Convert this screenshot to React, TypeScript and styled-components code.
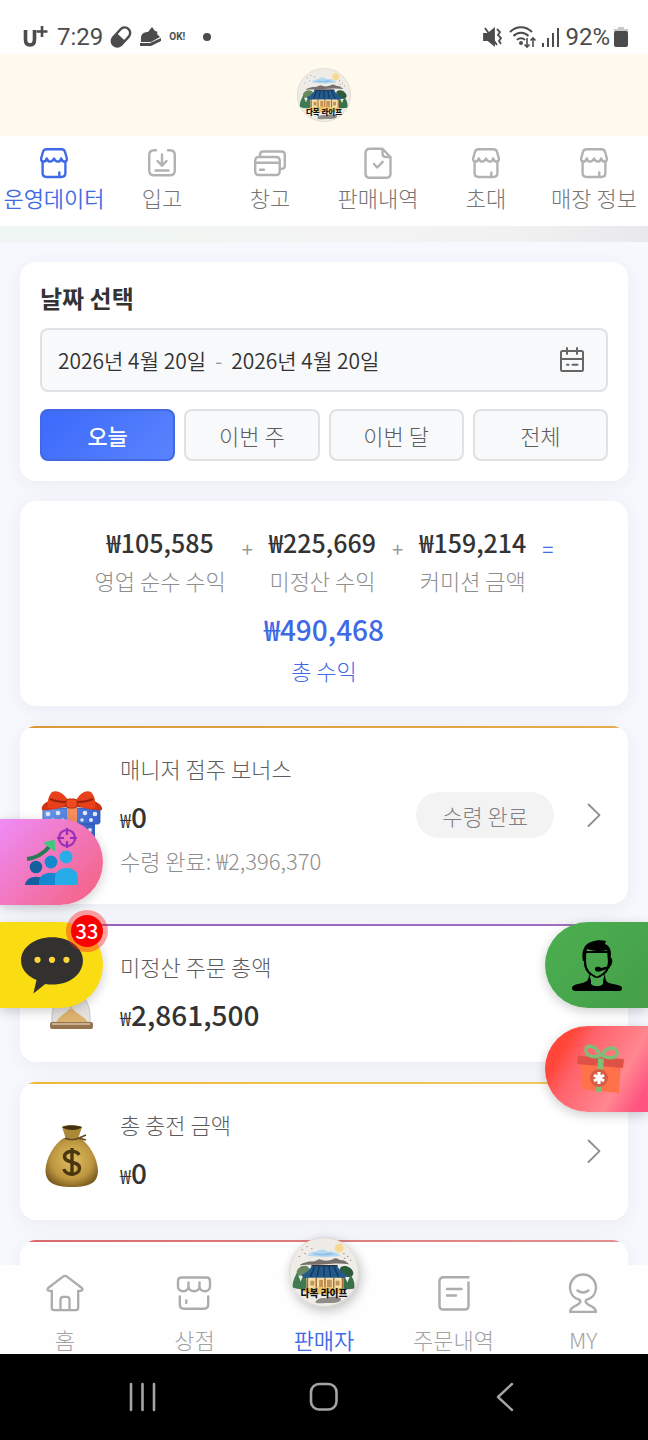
import React from "react";
import styled, { createGlobalStyle, css } from "styled-components";

const GlobalStyle = createGlobalStyle`
  *, *::before, *::after { box-sizing: border-box; }
  body { margin: 0; background: #000; }
  body, button { font-family: "Noto Sans CJK KR", "Noto Sans", sans-serif; }
  button { border: 0; padding: 0; background: none; color: inherit; cursor: pointer; }
  a { color: inherit; text-decoration: none; }
  h2, p { margin: 0; }
  svg { display: block; flex: none; }
`;

const blue = "#3f6ae6";

const Shell = styled.div`
  display: flex;
  flex-direction: column;
  height: 100vh;
  overflow: hidden;
  background: #f7f8fe;
`;

/* ---------- status bar ---------- */

const StatusBar = styled.div`
  display: flex;
  align-items: center;
  justify-content: space-between;
  height: 54px;
  flex: none;
  padding: 20px 20px 0 22px;
  background: #fefefe;
  color: #4c4c4c;
  font: 400 24px/34px Roboto, sans-serif;
`;

const StatusGroup = styled.div<{ $gap: number }>`
  display: flex;
  align-items: center;
  gap: ${(p) => p.$gap}px;
`;

const TinyOk = styled.span`
  padding: 0 12px 0 0;
  font-size: 10px;
  font-weight: 700;
`;

const Dot = styled.span`
  width: 8px;
  height: 8px;
  border-radius: 50%;
  background: currentColor;
`;

/* ---------- header and tabs ---------- */

const BrandBar = styled.header`
  display: flex;
  align-items: center;
  justify-content: center;
  height: 82px;
  flex: none;
  background: #fff9ee;
`;

const Tabs = styled.nav`
  display: grid;
  grid-template-columns: repeat(6, 1fr);
  padding: 11px 0 13px;
  flex: none;
  background: #fff;
`;

const Tab = styled.a<{ $active?: boolean }>`
  display: flex;
  flex-direction: column;
  align-items: center;
  gap: 2px;
  color: ${(p) => (p.$active ? blue : "#757575")};
  font-weight: ${(p) => (p.$active ? 350 : 300)};
  font-size: 22px;
  line-height: 32px;
  white-space: nowrap;
  svg { color: ${(p) => (p.$active ? blue : "#b2b2b2")}; }
`;

const Strip = styled.div`
  height: 16px;
  flex: none;
  background: linear-gradient(90deg, #eef5f2 0%, #f0f5f2 30%, #f4f4f4 55%, #f1f1f1 80%, #e9e9ed 100%);
`;

/* ---------- cards ---------- */

const Stage = styled.div`
  position: relative;
  flex: 1;
  min-height: 0;
`;

const Main = styled.main`
  display: flex;
  flex-direction: column;
  gap: 20px;
  height: 100%;
  padding: 20px;
  overflow-y: auto;
  scrollbar-width: none;
`;

const cardBase = css`
  flex: none;
  background: #fff;
  border-radius: 16px;
  box-shadow: 0 4px 20px rgba(50, 52, 60, 0.06);
`;

const DateCard = styled.section`
  ${cardBase}
  padding: 20px;
`;

const DateTitle = styled.h2`
  margin-bottom: 14px;
  color: #333;
  font-size: 24px;
  font-weight: 700;
  line-height: 32px;
`;

const DateField = styled.button`
  display: flex;
  align-items: center;
  width: 100%;
  height: 64px;
  padding: 0 20px 0 16px;
  border: 2px solid #e0e1e3;
  border-radius: 8px;
  background: #f8f9fb;
  color: #333;
  font-size: 21px;
  font-weight: 350;
  line-height: 32px;
  svg { margin-left: auto; color: #666; }
`;

const Dash = styled.span`
  padding: 0 9px;
  color: #999;
`;

const Ranges = styled.div`
  display: grid;
  grid-template-columns: repeat(4, 1fr);
  gap: 9px;
  margin-top: 17px;
`;

const RangeButton = styled.button<{ $active?: boolean }>`
  height: 52px;
  border: 2px solid ${(p) => (p.$active ? "#4269e2" : "#e0e1e3")};
  border-radius: 8px;
  background: ${(p) => (p.$active ? "linear-gradient(135deg, #3b69fb, #5a84fd) border-box" : "#f8f9fb")};
  color: ${(p) => (p.$active ? "#fff" : "#5c5c5c")};
  font-size: 22px;
  font-weight: ${(p) => (p.$active ? 500 : 300)};
  line-height: 32px;
`;

const SummaryCard = styled.section`
  ${cardBase}
  padding: 23px 20px 16px;
`;

const Sum = styled.div`
  display: flex;
  justify-content: center;
  gap: 16px;
  margin-bottom: 8px;
`;

const Figure = styled.div<{ $total?: boolean }>`
  text-align: center;
  strong {
    display: block;
    color: ${(p) => (p.$total ? blue : "#333")};
    font-size: ${(p) => (p.$total ? 28 : 25)}px;
    font-weight: 500;
    line-height: ${(p) => (p.$total ? 42 : 36)}px;
  }
  span {
    display: block;
    color: ${(p) => (p.$total ? blue : "#8e8e8e")};
    font-size: 22px;
    font-weight: 300;
    line-height: 40px;
  }
`;

const Operator = styled.span<{ $blue?: boolean }>`
  color: ${(p) => (p.$blue ? blue : "#999")};
  font-size: 20px;
  line-height: 50px;
`;

const MetricFrame = styled.section`
  ${cardBase}
`;

const MetricCard = styled.div<{ $line: string }>`
  position: relative;
  display: flex;
  align-items: center;
  gap: 16px;
  min-height: 138px;
  padding: 0 20px;
  border-radius: 16px;
  overflow: hidden;
  &::before {
    content: "";
    position: absolute;
    inset: 0 0 auto;
    height: 2px;
    background: ${(p) => p.$line};
  }
`;

const MetricText = styled.div`
  flex: 1;
  padding: 26px 0 28px;
`;

const MetricTitle = styled.h2`
  color: #5c5c5c;
  font-size: 22px;
  font-weight: 300;
  line-height: 32px;
`;

const MetricValue = styled.p`
  display: flex;
  align-items: baseline;
  height: 40px;
  margin-top: 12px;
  color: #333;
  font-size: 28px;
  font-weight: 500;
  line-height: 40px;
  small { font-size: 20px; font-weight: 350; }
`;

const MetricNote = styled.p`
  margin-top: 8px;
  color: #8e8e8e;
  font-size: 22px;
  font-weight: 300;
  line-height: 32px;
`;

const Pill = styled.button`
  height: 46px;
  margin-right: 10px;
  padding: 0 26px;
  border-radius: 23px;
  background: #f3f3f3;
  color: #808084;
  font-size: 22px;
  font-weight: 300;
  line-height: 32px;
`;

const Arrow = styled.a`
  color: #8e8e8e;
`;

/* ---------- floating shortcuts ---------- */

const Rail = styled.div<{ $side: "left" | "right"; $bottom: number }>`
  position: absolute;
  ${(p) => p.$side}: 0;
  bottom: ${(p) => p.$bottom}px;
  display: flex;
  flex-direction: column;
  gap: ${(p) => (p.$side === "left" ? 17 : 18)}px;
`;

const Float = styled.button<{ $side: "left" | "right"; $bg: string }>`
  position: relative;
  display: flex;
  align-items: center;
  justify-content: center;
  width: 103px;
  height: 86px;
  border-radius: ${(p) => (p.$side === "left" ? "0 43px 43px 0" : "43px 0 0 43px")};
  background: ${(p) => p.$bg};
  box-shadow: 0 3px 12px rgba(0, 0, 0, 0.2);
`;

const Badge = styled.span`
  position: absolute;
  top: -7px;
  right: 0;
  width: 32px;
  height: 32px;
  border-radius: 50%;
  background: #fb0000;
  box-shadow: 0 0 0 5px rgba(255, 30, 30, 0.42);
  color: #fff;
  font-size: 20px;
  font-weight: 500;
  line-height: 32px;
  text-align: center;
`;

/* ---------- bottom navigation ---------- */

const Dock = styled.nav`
  position: absolute;
  inset: auto 0 0;
  display: grid;
  grid-template-columns: repeat(5, 1fr);
  padding: 8px 0 1px;
  background: #fefefe;
`;

const DockItem = styled.a<{ $active?: boolean }>`
  display: flex;
  flex-direction: column;
  align-items: center;
  gap: 12px;
  color: ${(p) => (p.$active ? blue : "#a2a2a2")};
  font-size: 22px;
  font-weight: ${(p) => (p.$active ? 350 : 300)};
  line-height: 28px;
  svg { color: #acacac; }
`;

const DockLogo = styled.span`
  margin: -36px 0 6px;
  border-radius: 50%;
  box-shadow: 2px 4px 12px rgba(0, 0, 0, 0.25);
`;

const SystemBar = styled.div`
  display: grid;
  grid-template-columns: repeat(3, 1fr);
  align-items: center;
  justify-items: center;
  height: 86px;
  flex: none;
  padding: 0 52px;
  background: #000;
  color: #a4a4a4;
`;

/* ---------- drawings ---------- */

const line = {
  fill: "none",
  stroke: "currentColor",
  strokeWidth: 2.2,
  strokeLinecap: "round" as const,
  strokeLinejoin: "round" as const,
};

const StoreIcon = () => (
  <svg width="32" height="32" viewBox="0 0 32 32" {...line} strokeWidth={2.4}>
    <path d="M8.500 2.200h15c2 0 3.100.9 3.500 2.600l1.800 6.400c.5 2.100-.7 3.400-2.200 3.400-1.600 0-2.700-1-3.400-3.100-.7 2.100-1.700 3.100-3.400 3.100s-2.900-1-3.800-3.100c-.9 2.100-2.100 3.100-3.800 3.100s-2.700-1-3.400-3.100c-.7 2.100-1.800 3.100-3.400 3.100-1.500 0-2.700-1.300-2.200-3.400L5 4.800c.4-1.700 1.500-2.600 3.500-2.600Z" />
    <path d="M4.600 14.500V26c0 2.600 1.500 4 4 4h14.800c2.500 0 4-1.400 4-4V14.500M21.300 25.500V29" />
  </svg>
);

const InboxIcon = () => (
  <svg width="32" height="32" viewBox="0 0 32 32" {...line} strokeWidth={2.400}>
    <path d="M10 3.200H8c-3 0-4.800 1.800-4.800 4.800v15.500c0 3 1.800 4.800 4.800 4.800h16c3 0 4.800-1.800 4.800-4.800V8c0-3-1.800-4.800-4.800-4.800h-2M16 7.500V18M11.500 14l4.500 4.700 4.500-4.700M9.500 23.500h13" />
  </svg>
);

const CardsIcon = () => (
  <svg width="32" height="32" viewBox="0 0 32 32" {...line} strokeWidth={2.400}>
    <path d="M6 9V7.800C6 5.600 7.200 4.500 9.200 4.500h18.300c2 0 3.300 1.100 3.300 3.300v10.900c0 2-1.200 3.200-3.300 3.200H26" />
    <rect x="1.200" y="10" width="24.500" height="18" rx="3.200" />
    <path d="M1.500 15.800h24M6 22.800h4" />
  </svg>
);

const FileCheckIcon = () => (
  <svg width="32" height="32" viewBox="0 0 32 32" {...line} strokeWidth={2.400}>
    <path d="M20.500 1.800H8C5 1.800 3.500 3.300 3.500 6v20.500c0 2.700 1.500 4.300 4.500 4.300h16c3 0 4.500-1.600 4.500-4.300V10l-8-8.200ZM20.500 2v4.500c0 2.300 1.200 3.500 3.500 3.500h4.500M12 17l3.200 3.500 5.500-5.700" />
  </svg>
);

const CalendarIcon = () => (
  <svg width="28" height="28" viewBox="0 0 28 28" {...line} strokeWidth={2}>
    <rect x="3" y="5" width="22" height="20" rx="1.500" />
    <path d="M3 13h22M9 2v6M19 2v6M9 18.800h1.500M14.500 18.800h5" />
  </svg>
);

const ChevronIcon = () => (
  <svg width="28" height="28" viewBox="0 0 28 28" {...line} strokeWidth={1.800}>
    <path d="M8.500 3.500 19.500 14.200 8.500 25" />
  </svg>
);

const HomeIcon = () => (
  <svg width="40" height="40" viewBox="0 0 40 40" {...line} strokeWidth={2.300}>
    <path d="M6.800 17.800v17c0 1.600.9 2.400 2.400 2.400h21.600c1.500 0 2.400-.8 2.400-2.400v-17M6.800 17.800H4.300c-1.700 0-2.500-1.600-1.200-2.800L18 3.600c1.300-1 2.700-1 4 0L36.900 15c1.300 1.200.5 2.800-1.200 2.800h-2.500M15.500 37V26.500c0-1.700 1-2.700 2.700-2.700h3.600c1.700 0 2.700 1 2.700 2.700V37" />
  </svg>
);

const ShopIcon = () => (
  <svg width="40" height="40" viewBox="0 0 40 40" {...line} strokeWidth={2.400}>
    <path d="M7.500 4.500h25c2.200 0 3.500 1.300 3.500 3.500v5.200c0 3-2.200 5-5.200 5s-5.300-2-5.300-5c0 3-2.500 5-5.500 5s-5.500-2-5.500-5c0 3-2.300 5-5.300 5S4 16.200 4 13.200V8c0-2.200 1.300-3.500 3.500-3.500ZM14.500 13V9.500M25.500 13V9.500" />
    <path d="M5.800 23.500v8c0 2.800 1.500 4.200 4.200 4.200h20c2.700 0 4.200-1.400 4.200-4.200v-8M12.300 27.500v2.500" />
  </svg>
);

const OrdersIcon = () => (
  <svg width="40" height="40" viewBox="0 0 40 40" {...line} strokeWidth={2.400}>
    <path d="M34.500 4.300H9.500C7 4.300 5.500 5.700 5.500 8v25c0 2.300 1.500 3.500 4 3.500h21c2.500 0 4-1.200 4-3.500V9.500M13 16h14.500M13 22.500h9" />
  </svg>
);

const PersonIcon = () => (
  <svg width="40" height="40" viewBox="0 0 40 40" {...line} strokeWidth={2.400}>
    <path d="M16.500 26.800C10.800 25.300 7 20.700 7 14.800 7 7.300 12.800 1.500 20 1.500s13 5.800 13 13.300c0 5.900-3.800 10.500-9.500 12M14.500 17.500c3.600 2.600 7.400 2.600 11 0M16.500 26.800c2.500 2-1 4.700-4 6-3.500 1.500-5.300 3-5.300 6.200h25.600c0-3.200-1.800-4.700-5.300-6.200-3-1.300-6.500-4-4-6" />
  </svg>
);

const HanokLogo = ({ size, label }: { size: number; label: string }) => (
  <svg width={size} height={size} viewBox="0 0 72 72" role="img" aria-label={label}>
    <circle cx="36" cy="36" r="35.500" fill="#efece7" stroke="#c9c6c2" strokeWidth=".6" />
    <circle cx="51.500" cy="11.500" r="4.500" fill="#f7d893" />
    <circle cx="51.500" cy="11.500" r="6.500" fill="none" stroke="#f8e2b0" strokeWidth="1" strokeDasharray="1.500 2" />
    <path d="M19 19c2-3 6-4 9-4 3-3 9-3 12 0 6-1 11 2 13 4-8 2-24 2-34 0Z" fill="#b6d9f1" />
    <path d="M24 18c4-3 8 0 12-1s8-1 11 1c-7 1.500-17 1.500-23 0Z" fill="#8fc2e8" />
    <path d="M13 13h1M18 10h1M16 17h1M23 12h1M56 17h1M60 20h1M57 22h1M63 24h1M10 20h1" stroke="#666" strokeWidth="1" />
    <path d="M11 29c3-3 8-3 11-4 4 1 6-1 9-2 5 2 10 2 14 0 4-3 6 1 9 1 4 0 5 2 8 4-8-1-15-1-25 0s-18 0-26 1Z" fill="#77706c" />
    <path d="M8 35c2-5 8-7 12-4 3 3 1 7-3 8l-9 1Z" fill="#65885e" />
    <path d="M53 31c5-3 11 0 13 5 1 4-3 6-7 5-5-1-8-6-6-10Z" fill="#2c5d3b" />
    <path d="M4 52c-1-5 2-11 4-15 2 3 3 6 4 9 1-3 2-6 4-7 2 4 4 9 3 14-5 1-10 1-15-1Z" fill="#3f7a50" />
    <path d="M53 52c-1-5 1-9 3-12 2 2 3 4 4 7 1-3 2-6 4-7 3 4 4 9 3 13-5 1-10 1-14-1Z" fill="#3a7049" />
    <path d="M18 41h38v12H18Z" fill="#f5e0b0" />
    <path d="M19 41v12M28 42v11M37 42v11M46 42v11M55 41v12" stroke="#a86c2f" strokeWidth="1.500" />
    <path d="M22 45h4v5h-4ZM48 45h4v5h-4ZM31 44h4v8h-4ZM39 44h5v8h-5Z" fill="#c79352" />
    <path d="M24 29h25c3 5 6 8 11 10-1 3-4 4-7 3H20c-3 1-6 0-7-3 5-2 8-5 11-10Z" fill="#235a8c" />
    <path d="M26 31l-4 10M31 30l-2 11M36 30v11M41 30l2 11M46 30l5 11" stroke="#123a60" strokeWidth="1.500" />
    <path d="M23 29.500h27" stroke="#2b3440" strokeWidth="1.500" />
    <path d="M14 54c8-3 36-3 44 0 1 3-6 5-22 5s-23-2-22-5Z" fill="#eec46a" />
    <path d="M27 67c2-4 7-5 11-4 4-2 10-2 15 0 2 3-3 5-10 5s-14 1-16-1Z" fill="#8e8b89" />
    <text x="36" y="62" textAnchor="middle" fontSize="10" fontWeight="900" fill="#111" fontFamily="Noto Sans CJK KR, sans-serif">다복 라이프</text>
  </svg>
);

const GiftDrawing = () => (
  <svg width="64" height="72" viewBox="0 0 64 72">
    <defs>
      <linearGradient id="box" x1="0" x2="1"><stop offset="0" stopColor="#6d9bf0" /><stop offset="1" stopColor="#3762cc" /></linearGradient>
    </defs>
    <path d="M7 40h48v24c0 2-1 3-3 3H10c-2 0-3-1-3-3Z" fill="url(#box)" />
    <path d="M3 29h57v14c0 1-1 2-2 2H5c-1 0-2-1-2-2Z" fill="url(#box)" stroke="#2c50a4" strokeWidth=".8" />
    <path d="M27 29h10v38H27Z" fill="#f58d5c" />
    <g fill="#dce9fd"><circle cx="8" cy="35" r="2.300" /><circle cx="18" cy="34" r="2.300" /><circle cx="45" cy="34" r="2.300" /><circle cx="55" cy="35" r="2.300" /><circle cx="13" cy="41" r="1.800" /><circle cx="23" cy="41" r="1.800" /><circle cx="42" cy="41" r="1.800" /><circle cx="51" cy="41" r="2" /><circle cx="50" cy="51" r="2" /><circle cx="44" cy="58" r="2" /></g>
    <path d="M2 31c-1-4 2-7 7-9h45c5 2 9 5 8 9-9 1-16-2-23-3H25c-7 1-14 4-23 3Z" fill="#cf3213" />
    <path d="M27 24C21 29 14 31 8 29c-1-5 0-12 4-16 6-3 13 3 16 8Z" fill="#e8401b" />
    <path d="M36 24c6 5 13 7 19 5 1-5 0-12-4-16-6-3-12 3-15 8Z" fill="#e8401b" />
    <path d="M10 20c4 2 11 3 17 3M53 20c-4 2-11 3-17 3" stroke="#9b210b" strokeWidth="2" fill="none" />
    <rect x="26" y="20" width="11" height="9" rx="3" fill="#f04a20" stroke="#b82b0e" />
  </svg>
);

const HourglassDrawing = () => (
  <svg width="64" height="72" viewBox="0 0 64 72">
    <rect x="10" y="4" width="43" height="6" rx="2" fill="#8d6748" />
    <path d="M13 10h38c1 12-8 17-15 23v3c9 3 15 11 14 29H12c-1-18 6-26 15-29v-3C20 27 12 22 13 10Z" fill="#e4e2e1" stroke="#c6c4c4" />
    <path d="M16 66c2-7 10-9 15-16 5 7 14 9 17 16Z" fill="#deb36f" />
    <path d="M31 36v16" stroke="#e9c68d" strokeWidth="2" />
    <rect x="10" y="65" width="43" height="7" rx="2" fill="#98734f" />
    <path d="M12 67h38" stroke="#ddc4a2" strokeWidth="1.500" />
  </svg>
);

const MoneyBagDrawing = () => (
  <svg width="64" height="72" viewBox="0 0 64 72">
    <defs>
      <radialGradient id="bag" cx=".5" cy=".45" r=".6"><stop offset="0" stopColor="#dfbf62" /><stop offset=".65" stopColor="#bd9740" /><stop offset="1" stopColor="#76581d" /></radialGradient>
    </defs>
    <path d="M24 23C14 29 6 43 5.500 55 5.500 67 13 72 32 72s26-5 26-17C57 42 49 29 40 23Z" fill="url(#bag)" />
    <path d="M22 12c6-3 14-2 20 0l-4 12c-4 2-8 2-12 0Z" fill="#ab8738" />
    <path d="M22 12c5-2 14-2 20 0-4 4-15 4-20 0Z" fill="#40300f" />
    <path d="M25 23c4 2 10 2 14 0l7-3M39 23l7 2" fill="none" stroke="#62471c" strokeWidth="1.500" />
    <path d="M39 40c-2-5-14-5-14.500 1.500C24.500 49 39.500 45 39.500 53.500 39 61 25 60.500 24 54M32 33v28" fill="none" stroke="#4b3610" strokeWidth="3.400" />
  </svg>
);

const TeamDrawing = () => (
  <svg width="56" height="70" viewBox="0 0 56 70">
    <path d="M3 32c9-1 16-5 22-12" fill="none" stroke="#287b54" strokeWidth="4" />
    <path d="M20 16l10-3 1 11Z" fill="#42c77f" stroke="#42c77f" strokeLinejoin="round" />
    <g fill="none" stroke="#9531b9" strokeWidth="2.200"><circle cx="43" cy="11" r="8" /><path d="M43 1v7M43 14v7M33 11h7M46 11h7" /></g>
    <g fill="#155f9f"><circle cx="12" cy="40" r="6.300" /><path d="M1 58c1-11 21-11 22 0Z" /></g>
    <g fill="#1688d0"><circle cx="27" cy="35" r="6.400" /><path d="M15 58v-4c1-11 23-11 24 0v4Z" /></g>
    <g fill="#26ace6"><circle cx="42" cy="30" r="6.500" /><path d="M31 58V50c1-12 22-12 23 0v8Z" /></g>
  </svg>
);

const ChatDrawing = () => (
  <svg width="64" height="58" viewBox="0 0 62 56">
    <path d="M31 1C14 1 1 11 1 23.500c0 8 5 15 15 19l-3 13 11.500-9c21 3 36.500-8 36.500-23C61 11 48 1 31 1Z" fill="#333130" />
    <g fill="#fad73a"><circle cx="17" cy="23" r="3" /><circle cx="31" cy="23" r="3" /><circle cx="45" cy="23" r="3" /></g>
  </svg>
);

const AgentDrawing = () => (
  <svg width="52" height="52" viewBox="0 0 52 52">
    <path d="M14 23c0 8 5 13 12 16 7-3 12-8 12-16V13H14Z" fill="none" stroke="#000" strokeWidth="2.200" />
    <path d="M12 22c-2-9 1-17 8-19 5-2 11-2 15-1l-1 3c6 2 7 9 5 17h-2l-1-11c-6 2-14 1-20-1l-2 12Z" />
    <path d="M37 18c4 0 5 3 4 6-.5 3-2 4-4 4ZM24 29c2-2 5-1 6 0l8-2 1 2-9 3c-2 1-5 1-6-1Z" />
    <path d="M18 34l2 8c3 5 10 5 12 0l2-8c0 6 1 9 4 10 8 2 13 2 13 5s-2 3-4 3H5c-3 0-4-1-4-3 0-4 9-4 13-6 3-1 4-4 4-9Z" />
    <path d="M20 36c2 2 4 3 6 3s4-1 6-3v9c-3 3-9 3-12 0Z" fill="#4caa50" />
  </svg>
);

const PresentDrawing = () => (
  <svg width="50" height="50" viewBox="0 0 50 50">
    <path d="M4 16l41 3-2 30-37-4Z" fill="#ff7148" />
    <path d="M2 12l46 3-1 9L1 20Z" fill="#dd5146" />
    <path d="M22 14l6 1-3 33h-5Z" fill="#80bd77" />
    <path d="M24 11C19 0 9 0 10 7c1 6 10 7 14 4Zm2 0c4-9 15-9 15-2 0 6-10 6-15 2Z" fill="none" stroke="#80bd77" strokeWidth="3.500" />
    <circle cx="23" cy="34" r="9" fill="#d75c46" />
    <path d="M23 28v12M18 31l10 6M28 31l-10 6" stroke="#fff" strokeWidth="3.200" />
  </svg>
);

const PresentSlot = styled.span`
  padding-left: 8px;
`;

const CarrierMark = () => (
  <svg width="29" height="24" viewBox="0 0 29 24" fill="none" stroke="currentColor" aria-label="U+" role="img">
    <path d="M3.500 5v9.500c0 3.500 1.500 5.500 4.500 5.500s4.500-2 4.500-5.500V5" strokeWidth="3.600" />
    <path d="M20 1v11M14.500 6.500h11" strokeWidth="2.600" />
  </svg>
);

const PillIcon = () => (
  <svg width="24" height="24" viewBox="0 0 24 24">
    <g transform="rotate(42 12 12)">
      <rect x="6.500" y="1" width="11" height="22" rx="5.500" fill="none" stroke="currentColor" strokeWidth="2.400" />
      <path d="M6.500 12h11v5.500a5.500 5.500 0 0 1-11 0Z" fill="currentColor" />
    </g>
  </svg>
);

const ShoeIcon = () => (
  <svg width="24" height="22" viewBox="0 0 24 22" fill="currentColor">
    <path d="M2 12c0-4 3-6 7-6l4-5 3 4c2 0 3 1 2 3l3 3-9 5H2ZM1 17h10l11-5v3l-10 5H1Z" />
  </svg>
);

const MuteIcon = () => (
  <svg width="22" height="22" viewBox="0 0 22 22" fill="none" stroke="currentColor" strokeWidth="1.800">
    <path d="M1 8h4l6-5v16l-6-5H1Z" fill="currentColor" />
    <path d="M2 2l12 17M14 3l3 3-2 3 3 3-2 3 2 3" />
  </svg>
);

const WifiIcon = () => (
  <svg width="28" height="24" viewBox="0 0 28 24" fill="none" stroke="currentColor" strokeWidth="2">
    <path d="M1 7C7 .5 17 .5 23 7M4.500 11c4-4.500 11-4.500 15 0M8 15c2-2.500 6-2.500 8 0" />
    <circle cx="12" cy="18" r="1" fill="currentColor" />
    <path d="M18 13v9M15.500 19.500 18 22l2.500-2.500M24 22v-9M21.500 15.500 24 13l2.500 2.500" strokeWidth="1.600" />
  </svg>
);

const SignalIcon = () => (
  <svg width="20" height="20" viewBox="0 0 20 20" fill="none" stroke="currentColor" strokeWidth="2">
    <path d="M2 20v-4M7 20V11M12 20V6M17 20V1" />
  </svg>
);

const BatteryIcon = () => (
  <svg width="14" height="20" viewBox="0 0 14 20">
    <path d="M4 0h6v2h4v3H0V2h4Z" fill="#c8c8c8" />
    <rect y="4" width="14" height="16" rx="2" fill="currentColor" />
  </svg>
);

/* ---------- data ---------- */

const tabs = [
  { label: "운영데이터", Icon: StoreIcon, active: true },
  { label: "입고", Icon: InboxIcon },
  { label: "창고", Icon: CardsIcon },
  { label: "판매내역", Icon: FileCheckIcon },
  { label: "초대", Icon: StoreIcon },
  { label: "매장 정보", Icon: StoreIcon },
];

const ranges = ["오늘", "이번 주", "이번 달", "전체"];

const metrics = [
  { title: "매니저 점주 보너스", value: "0", note: "수령 완료: ₩2,396,370", status: "수령 완료", line: "linear-gradient(90deg, #dc9838, #e5ac50)", Drawing: GiftDrawing },
  { title: "미정산 주문 총액", value: "2,861,500", line: "linear-gradient(90deg, #9660b4, #a66fc0)", Drawing: HourglassDrawing },
  { title: "총 충전 금액", value: "0", line: "linear-gradient(90deg, #edb936, #f0cb60)", Drawing: MoneyBagDrawing },
];

export default function App() {
  return (
    <Shell>
      <GlobalStyle />
      <StatusBar>
        <StatusGroup $gap={6}>
          <CarrierMark />
          <span>7:29</span>
          <PillIcon />
          <ShoeIcon />
          <TinyOk>OK!</TinyOk>
          <Dot />
        </StatusGroup>
        <StatusGroup $gap={4}>
          <MuteIcon />
          <WifiIcon />
          <SignalIcon />
          <span>92%</span>
          <BatteryIcon />
        </StatusGroup>
      </StatusBar>

      <BrandBar>
        <HanokLogo size={54} label="다복 라이프" />
      </BrandBar>

      <Tabs>
        {tabs.map(({ label, Icon, active }) => (
          <Tab key={label} href="#" $active={active}>
            <Icon />
            {label}
          </Tab>
        ))}
      </Tabs>
      <Strip />

      <Stage>
        <Main>
          <DateCard>
            <DateTitle>날짜 선택</DateTitle>
            <DateField type="button">
              <span>2026년 4월 20일</span>
              <Dash>-</Dash>
              <span>2026년 4월 20일</span>
              <CalendarIcon />
            </DateField>
            <Ranges>
              {ranges.map((label, i) => (
                <RangeButton key={label} type="button" $active={i === 0}>{label}</RangeButton>
              ))}
            </Ranges>
          </DateCard>

          <SummaryCard>
            <Sum>
              <Figure><strong>₩105,585</strong><span>영업 순수 수익</span></Figure>
              <Operator>+</Operator>
              <Figure><strong>₩225,669</strong><span>미정산 수익</span></Figure>
              <Operator>+</Operator>
              <Figure><strong>₩159,214</strong><span>커미션 금액</span></Figure>
              <Operator $blue>=</Operator>
            </Sum>
            <Figure $total><strong>₩490,468</strong><span>총 수익</span></Figure>
          </SummaryCard>

          {metrics.map(({ title, value, note, status, line: accent, Drawing }) => (
            <MetricFrame key={title}>
              <MetricCard $line={accent}>
                <Drawing />
                <MetricText>
                  <MetricTitle>{title}</MetricTitle>
                  <MetricValue><small>₩</small>{value}</MetricValue>
                  {note && <MetricNote>{note}</MetricNote>}
                </MetricText>
                {status && <Pill type="button">{status}</Pill>}
                <Arrow href="#" aria-label={title}><ChevronIcon /></Arrow>
              </MetricCard>
            </MetricFrame>
          ))}
          <MetricFrame>
            <MetricCard $line="linear-gradient(90deg, #d8696f, #e48f8f)" />
          </MetricFrame>
        </Main>

        <Rail $side="left" $bottom={346}>
          <Float type="button" $side="left" $bg="linear-gradient(135deg, #ee8cf8, #f5607c)" aria-label="팀">
            <TeamDrawing />
          </Float>
          <Float type="button" $side="left" $bg="#fadc13" aria-label="채팅">
            <ChatDrawing />
            <Badge>33</Badge>
          </Float>
        </Rail>
        <Rail $side="right" $bottom={242}>
          <Float type="button" $side="right" $bg="linear-gradient(135deg, #4caf50, #459f49)" aria-label="상담">
            <AgentDrawing />
          </Float>
          <Float type="button" $side="right" $bg="linear-gradient(120deg, #ff4639 20%, #ff626b 35%, #ff8790 70%, #ff5580 90%)" aria-label="선물">
            <PresentSlot><PresentDrawing /></PresentSlot>
          </Float>
        </Rail>

        <Dock>
          <DockItem href="#"><HomeIcon />홈</DockItem>
          <DockItem href="#"><ShopIcon />상점</DockItem>
          <DockItem href="#" $active><DockLogo><HanokLogo size={70} label="다복 라이프" /></DockLogo>판매자</DockItem>
          <DockItem href="#"><OrdersIcon />주문내역</DockItem>
          <DockItem href="#"><PersonIcon />MY</DockItem>
        </Dock>
      </Stage>

      <SystemBar>
        <button type="button" aria-label="최근 앱">
          <svg width="28" height="30" viewBox="0 0 28 30" {...line} strokeWidth={2.600}><path d="M2 2v26M13.500 2v26M25 2v26" /></svg>
        </button>
        <button type="button" aria-label="홈 화면">
          <svg width="30" height="30" viewBox="0 0 30 30" {...line} strokeWidth={2.600}><rect x="2" y="2" width="25.500" height="25.500" rx="8" /></svg>
        </button>
        <button type="button" aria-label="뒤로">
          <svg width="30" height="30" viewBox="0 0 30 30" {...line} strokeWidth={2.400}><path d="M22 2 8 15l14 13" /></svg>
        </button>
      </SystemBar>
    </Shell>
  );
}
